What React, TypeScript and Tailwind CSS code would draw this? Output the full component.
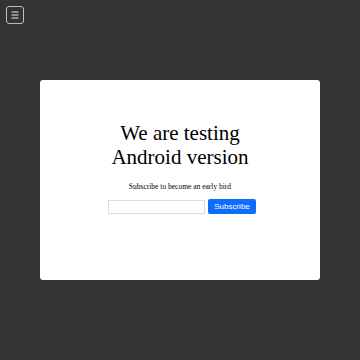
import React from "react";

function MenuButton() {
  return (
    <button className="absolute left-[6px] top-[6px] w-[18px] h-[18px] rounded-[3px] border border-[#bdbdbd] flex items-center justify-center">
      <svg width="10" height="10" viewBox="0 0 10 10" fill="none" stroke="#e5e5e5" strokeWidth={1.2}>
        <path d="M1.5 2h7M1.5 5h7M1.5 8h7" />
      </svg>
    </button>
  );
}

export default function App() {
  return (
    <main className="relative w-[360px] h-[360px] bg-[#333333] flex items-center justify-center">
      <MenuButton />
      <div className="w-[280px] h-[200px] bg-white rounded-[3px] flex flex-col items-center pt-[41px] font-['Liberation_Serif',serif] text-black">
        <h1 className="text-[21px] leading-[24px] text-center">
          We are testing
          <br />
          Android version
        </h1>
        <p className="mt-[13px] text-[7.5px] leading-[10px]">Subscribe to become an early bird</p>
        <div className="mt-[7px] ml-[4px] flex items-center gap-[3px]">
          <input className="w-[97px] h-[14px] border border-[#dcdcdc] outline-none" />
          <button className="w-[48px] h-[15px] rounded-[2px] bg-[#0d6efd] text-white text-[8px] font-['Liberation_Sans',sans-serif]">
            Subscribe
          </button>
        </div>
      </div>
    </main>
  );
}
